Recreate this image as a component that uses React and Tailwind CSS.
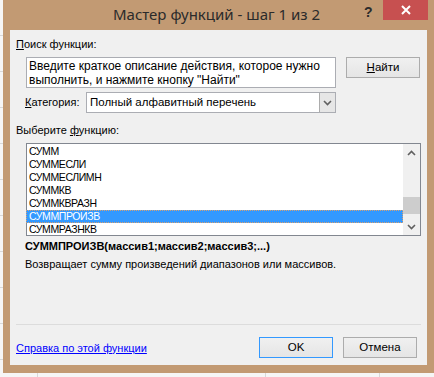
import React from "react";

const functions = [
  "СУММ",
  "СУММЕСЛИ",
  "СУММЕСЛИМН",
  "СУММКВ",
  "СУММКВРАЗН",
  "СУММПРОИЗВ",
  "СУММРАЗНКВ",
];

const body = { fontFamily: '"Liberation Sans", Arial, sans-serif' };
const title = { fontFamily: '"Noto Sans", "Open Sans", sans-serif' };

const Chevron = ({ up }) => (
  <svg width="9" height="6" viewBox="0 0 9 6" className="text-[#606060]">
    <path
      d={up ? "M1 5 L4.5 1.5 L8 5" : "M1 1 L4.5 4.5 L8 1"}
      fill="none"
      stroke="currentColor"
      strokeWidth="1.6"
    />
  </svg>
);

const Button = ({ children, primary }) => (
  <button
    className={
      "w-[74px] h-[21px] text-[11.5px] text-black bg-gradient-to-b from-[#f0f0f0] to-[#e5e5e5] border " +
      (primary ? "border-[#3399ff]" : "border-[#acacac]")
    }
  >
    {children}
  </button>
);

export default function App() {
  return (
    <div
      className="w-[434px] h-[377px] overflow-hidden bg-[#f6f6f6] flex flex-col"
      style={body}
    >
      <div className="flex">
        <div className="w-[3px] h-[373px] bg-[repeating-linear-gradient(to_bottom,#f6f6f6_0px,#f6f6f6_35px,#d8d8d8_35px,#d8d8d8_36px)]" />
        <div className="w-[431px] h-[373px] bg-[#c29a73] flex flex-col">
          {/* title bar */}
          <div className="h-[30px] relative flex items-center justify-center">
            <span
              className="text-[15px] text-[#2b2b2b] pb-[1px] -ml-[4px]"
              style={title}
            >
              Мастер функций - шаг 1 из 2
            </span>
            <span className="absolute left-[361px] top-[2px] text-[14px] font-bold text-[#2b2b2b]">
              ?
            </span>
            <div className="absolute left-[380px] top-0 w-[45px] h-[20px] bg-[#c75050] flex items-center justify-center">
              <svg width="10" height="10" viewBox="0 0 10 10">
                <path d="M1 1 L9 9 M9 1 L1 9" stroke="white" strokeWidth="2" />
              </svg>
            </div>
          </div>

          {/* client */}
          <div className="mx-[7px] h-[335px] bg-[#f0f0f0] text-[11px] text-black flex flex-col px-[6px]">
            <div className="mt-[6px] leading-[16px]">
              <span className="underline">П</span>оиск функции:
            </div>
            <div className="flex mt-[5px] ml-[10px]">
              <div className="w-[310px] h-[31px] bg-white border border-[#abadb3] px-[2px] pt-[1px] text-[12px] leading-[14px]">
                Введите краткое описание действия, которое нужно
                <br />
                выполнить, и нажмите кнопку "Найти"
              </div>
              <div className="ml-[10px]">
                <Button>
                  <span className="underline">Н</span>айти
                </Button>
              </div>
            </div>
            <div className="flex items-center mt-[4px] ml-[9px]">
              <span className="w-[61px]">
                <span className="underline">К</span>атегория:
              </span>
              <div className="w-[250px] h-[21px] bg-white border border-[#abadb3] flex items-center">
                <span className="flex-1 pl-[3px] text-[11.5px]">
                  Полный алфавитный перечень
                </span>
                <div className="w-[16px] h-[19px] bg-[#e6e6e6] border-l border-[#acacac] flex items-center justify-center">
                  <Chevron />
                </div>
              </div>
            </div>
            <div className="mt-[9px] leading-[16px]">
              Выберите <span className="underline">ф</span>ункцию:
            </div>
            <div className="mt-[5px] ml-[10px] w-[395px] h-[93px] bg-white border border-[#828790] flex">
              <div className="flex-1 pt-[1px] text-[10.5px] tracking-[-0.4px] leading-[13px]">
                {functions.map((f) =>
                  f === "СУММПРОИЗВ" ? (
                    <div
                      key={f}
                      className="h-[13px] bg-[#3399ff] text-white pl-[2px] border border-dotted border-[#d8a070] -ml-px leading-[11px]"
                    >
                      {f}
                    </div>
                  ) : (
                    <div key={f} className="h-[13px] pl-[2px]">
                      {f}
                    </div>
                  )
                )}
              </div>
              <div className="w-[17px] bg-[#f0f0f0] flex flex-col items-center">
                <div className="h-[17px] flex items-center justify-center">
                  <Chevron up />
                </div>
                <div className="flex-1 w-full flex flex-col justify-end pb-[4px]">
                  <div className="h-[17px] w-full bg-[#cdcdcd]" />
                </div>
                <div className="h-[17px] flex items-center justify-center">
                  <Chevron />
                </div>
              </div>
            </div>
            <div className="mt-[2px] ml-[9px] font-bold text-[11px] leading-[16px]">
              СУММПРОИЗВ(массив1;массив2;массив3;...)
            </div>
            <div className="mt-[2px] ml-[9px] leading-[16px]">
              Возвращает сумму произведений диапазонов или массивов.
            </div>
            <div className="mt-[52px] h-px bg-[#dcdcdc] w-[405px]" />
            <div className="flex items-center mt-[12px] h-[21px]">
              <a className="flex-1 text-[#0000ff] underline leading-[16px]">
                Справка по этой функции
              </a>
              <Button primary>OK</Button>
              <div className="w-[10px]" />
              <Button>Отмена</Button>
              <div className="w-[4px]" />
            </div>
          </div>
        </div>
      </div>
      <div className="flex-1 bg-[#f6f6f6] flex">
        <div className="w-[38px] border-r border-[#d8d8d8]" />
        <div className="w-[228px] border-r border-[#d8d8d8]" />
        <div className="w-[114px] border-r border-[#d8d8d8]" />
      </div>
    </div>
  );
}
